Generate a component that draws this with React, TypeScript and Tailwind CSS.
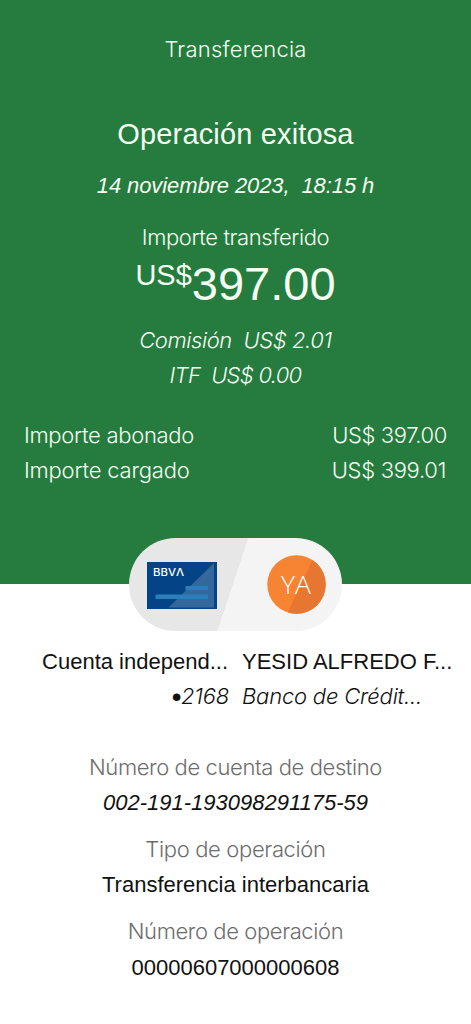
import clsx from 'clsx';

interface LineProps {
  children: React.ReactNode;
  light?: boolean;
  className?: string;
}

function Line({ children, light, className }: LineProps) {
  return (
    <p
      className={clsx(
        'whitespace-pre text-[22px] leading-[35px]',
        light && "font-['Inter',sans-serif] font-light",
        className
      )}
    >
      {children}
    </p>
  );
}

function BankCard() {
  return (
    <svg width="70" height="47" viewBox="0 0 70 47" className="mt-0.5 block">
      <rect width="70" height="47" fill="#08427f" />
      <rect x="1" y="1" width="68" height="45" fill="#044486" />
      <path d="M21.5 45.5 67 1v44.5z" fill="#34689d" />
      <path d="M38.5 24H61v4H38.5zM8.5 32.500H61v4.500H8.500z" fill="#2b7ebb" />
      <text
        x="6"
        y="14"
        fill="#fff"
        fontFamily="Inter, sans-serif"
        fontSize="10"
        fontWeight="500"
        textLength="31"
        lengthAdjust="spacingAndGlyphs"
      >
        BBVΛ
      </text>
    </svg>
  );
}

function Avatar() {
  return (
    <svg width="59" height="59" viewBox="0 0 59 59" className="block">
      <defs>
        <clipPath id="avatar">
          <circle cx="29.5" cy="29.5" r="29.2" />
        </clipPath>
      </defs>
      <g clipPath="url(#avatar)">
        <rect width="59" height="59" fill="#f68432" />
        <path d="M20 59 46 4h13v55z" fill="#e67630" />
      </g>
      <text
        x="29"
        y="39"
        fill="#fff"
        fontFamily="Open Sans, sans-serif"
        fontSize="26.5"
        fontWeight="300"
        textAnchor="middle"
      >
        YA
      </text>
    </svg>
  );
}

export default function App() {
  return (
    <main className="h-[1024px] w-[471px] overflow-hidden bg-white font-['Liberation_Sans',sans-serif] text-[#111]">
      <section className="h-[584px] bg-[#267b3f] pt-8 text-center text-[#f4fff2]">
        <Line light className="tracking-[0.2px]">Transferencia</Line>
        <h1 className="mt-[47px] text-[29px] leading-[40px] tracking-[0.15px]">Operación exitosa</h1>
        <Line className="mt-[14px] italic tracking-[-0.1px]">{'14 noviembre 2023,  18:15 h'}</Line>
        <Line light className="mt-[17px] tracking-[-0.4px]">Importe transferido</Line>
        <div className="flex h-[68px] items-start justify-center">
          <span className="pt-1 text-[29px] leading-[32px]">US$</span>
          <span className="pt-[5px] text-[47px] leading-[48px]">397.00</span>
        </div>
        <Line light className="italic tracking-[-0.4px]">{'Comisión  US$ 2.01'}</Line>
        <Line light className="italic tracking-[-0.7px]">{'ITF  US$ 0.00'}</Line>
        <div className="mt-[25px] flex justify-between px-6">
          <Line light className="tracking-[-0.3px]">Importe abonado</Line>
          <Line light className="tracking-[-0.4px]">US$ 397.00</Line>
        </div>
        <div className="flex justify-between pr-[25px] pl-6">
          <Line light className="tracking-[-0.2px]">Importe cargado</Line>
          <Line light className="tracking-[-0.3px]">US$ 399.01</Line>
        </div>
      </section>

      <div className="relative -mt-[46px] ml-[129px] flex h-[93px] w-[213px] items-center justify-between rounded-full bg-[linear-gradient(108.4deg,#e7e7e7_calc(50%-3px),#f4f4f4_calc(50%-2px))] pr-4 pl-[18px]">
        <BankCard />
        <Avatar />
      </div>

      <section className="mt-[13px] grid grid-cols-[229px_1fr] gap-x-[13px]">
        <div className="text-right">
          <Line className="pr-px">Cuenta independ...</Line>
          <Line light className="flex items-center justify-end italic tracking-[-0.2px]">
            <span className="font-['Liberation_Sans',sans-serif] text-[28px]">•</span>2168
          </Line>
        </div>
        <div>
          <Line>YESID ALFREDO F...</Line>
          <Line light className="italic tracking-[-0.2px]">Banco de Crédit...</Line>
        </div>
      </section>

      <section className="mt-9 text-center">
        <Line light className="tracking-[-0.4px] text-[#6d6d6d]">Número de cuenta de destino</Line>
        <Line className="italic">002-191-193098291175-59</Line>
        <Line light className="mt-3 tracking-[-0.35px] text-[#6d6d6d]">Tipo de operación</Line>
        <Line>Transferencia interbancaria</Line>
        <Line light className="mt-3 tracking-[-0.4px] text-[#6d6d6d]">Número de operación</Line>
        <Line className="pt-px">00000607000000608</Line>
      </section>
    </main>
  );
}
